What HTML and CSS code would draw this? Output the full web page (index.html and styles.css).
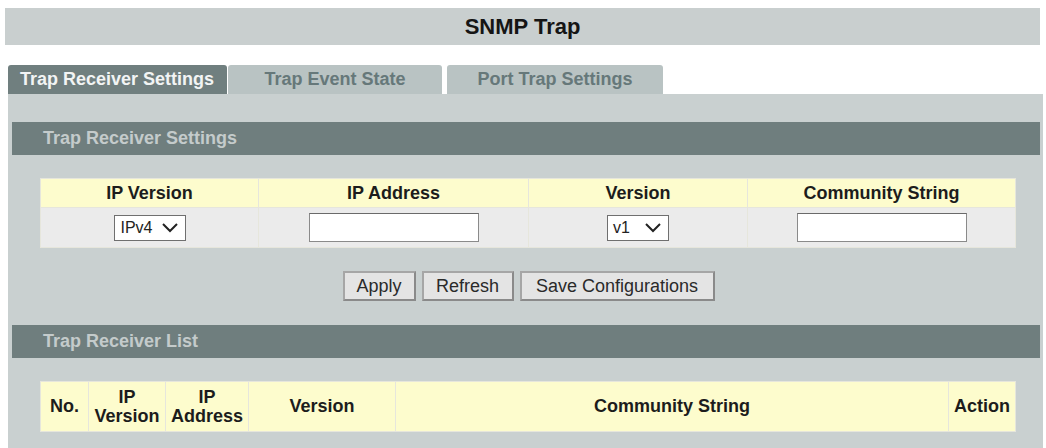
FILE: index.html
```html
<!DOCTYPE html>
<html>
<head>
<meta charset="utf-8">
<link rel="stylesheet" href="styles.css">
</head>
<body>
<div class="title">SNMP Trap</div>
<div class="tabs">
  <div class="tab active">Trap Receiver Settings</div>
  <div class="tab t2">Trap Event State</div>
  <div class="tab t3">Port Trap Settings</div>
</div>
<div class="panel">
  <div class="section">Trap Receiver Settings</div>
  <div class="content">
    <table class="grid form">
      <colgroup><col class="c1"><col class="c2"><col class="c3"><col class="c4"></colgroup>
      <tr class="head">
        <th>IP Version</th><th>IP Address</th><th>Version</th><th>Community String</th>
      </tr>
      <tr class="data">
        <td><div class="select s-ip"><span>IPv4</span><svg width="18" height="12" viewBox="0 0 18 12"><path d="M2 2 L9 9 L16 2" fill="none" stroke="#222" stroke-width="2"/></svg></div></td>
        <td><div class="input"></div></td>
        <td><div class="select s-v"><span>v1</span><svg width="18" height="12" viewBox="0 0 18 12"><path d="M2 2 L9 9 L16 2" fill="none" stroke="#222" stroke-width="2"/></svg></div></td>
        <td><div class="input"></div></td>
      </tr>
    </table>
    <div class="buttons">
      <button class="btn b-apply">Apply</button>
      <button class="btn b-refresh">Refresh</button>
      <button class="btn b-save">Save Configurations</button>
    </div>
  </div>
  <div class="section">Trap Receiver List</div>
  <div class="content last">
    <table class="grid list">
      <colgroup><col class="l1"><col class="l2"><col class="l3"><col class="l4"><col class="l5"><col class="l6"></colgroup>
      <tr class="head2">
        <th>No.</th><th>IP<br>Version</th><th>IP<br>Address</th><th>Version</th><th>Community String</th><th>Action</th>
      </tr>
    </table>
  </div>
</div>
</body>
</html>
```

FILE: styles.css
```css
* { box-sizing: border-box; }
html, body { margin: 0; padding: 0; background: #fff; }
body {
  font-family: "Liberation Sans", Arial, sans-serif;
  color: #1e1e1e;
  width: 1046px;
  height: 448px;
  overflow: hidden;
}
.title {
  margin: 8px 6px 0 5px;
  height: 37px;
  line-height: 38px;
  background: #c9cfcf;
  text-align: center;
  font-weight: bold;
  font-size: 22px;
  color: #151515;
}
.tabs {
  display: flex;
  margin-top: 20px;
  padding-left: 8px;
  height: 29px;
}
.tab {
  height: 29px;
  line-height: 29px;
  font-weight: bold;
  font-size: 18px;
  text-align: center;
  border-radius: 3px 3px 0 0;
  white-space: nowrap;
}
.tab.active {
  width: 219px;
  background: #707f7f;
  color: #f2f4f4;
  text-align: left;
  padding-left: 12px;
}
.tab.t2 {
  width: 214px;
  margin-left: 1px;
  background: #b9c3c3;
  color: #66787a;
}
.tab.t3 {
  width: 216px;
  margin-left: 5px;
  background: #b9c3c3;
  color: #66787a;
}
.panel {
  margin: 0 3px 0 8px;
  background: #c9d0d0;
  padding: 28px 3px 0 4px;
}
.section {
  height: 33px;
  line-height: 33px;
  background: #6f7e7e;
  color: #c4cbcb;
  font-weight: bold;
  font-size: 18px;
  padding-left: 31px;
}
.content {
  padding: 23px 0 24px 28px;
}
.content.last {
  padding-bottom: 16px;
}
.grid {
  border-collapse: collapse;
  width: 975px;
  table-layout: fixed;
}
.grid th, .grid td {
  border: 1px solid #e6e6dc;
  text-align: center;
  padding: 0;
}
.grid th {
  background: #fdfccd;
  font-weight: bold;
  font-size: 18px;
  color: #1c1c1c;
}
.form .head th { height: 29px; }
.form .data td { height: 40px; background: #ebebeb; }
.c1 { width: 218px; }
.c2 { width: 270px; }
.c3 { width: 219px; }
.c4 { width: 268px; }
.l1 { width: 48px; }
.l2 { width: 77px; }
.l3 { width: 83px; }
.l4 { width: 147px; }
.l5 { width: 553px; }
.l6 { width: 67px; }
.head2 th { height: 50px; line-height: 19px; }
.select {
  display: inline-flex;
  align-items: center;
  justify-content: space-between;
  height: 26px;
  background: #fff;
  border: 1px solid #6f6f6f;
  font-size: 16px;
  color: #222;
  vertical-align: middle;
}
.s-ip { width: 72px; padding: 0 6px 0 6px; }
.s-v { width: 62px; padding: 0 6px 0 5px; }
.select svg { display: block; }
.input {
  display: inline-block;
  width: 170px;
  height: 29px;
  background: #fff;
  border: 1px solid #8a8a8a;
  border-top-color: #6a6a6a;
  vertical-align: middle;
}
.buttons {
  display: flex;
  justify-content: center;
  gap: 6px;
  width: 975px;
  margin-top: 23px;
  padding-left: 2px;
}
.btn {
  height: 30px;
  font-family: "Liberation Sans", Arial, sans-serif;
  font-size: 18px;
  color: #2a2a2a;
  background: #e4e4e4;
  border: 2px solid #a6a6a6;
  border-right-color: #8a8a8a;
  border-bottom-color: #8a8a8a;
  padding: 0;
}
.b-apply { width: 73px; }
.b-refresh { width: 92px; }
.b-save { width: 195px; }
```
